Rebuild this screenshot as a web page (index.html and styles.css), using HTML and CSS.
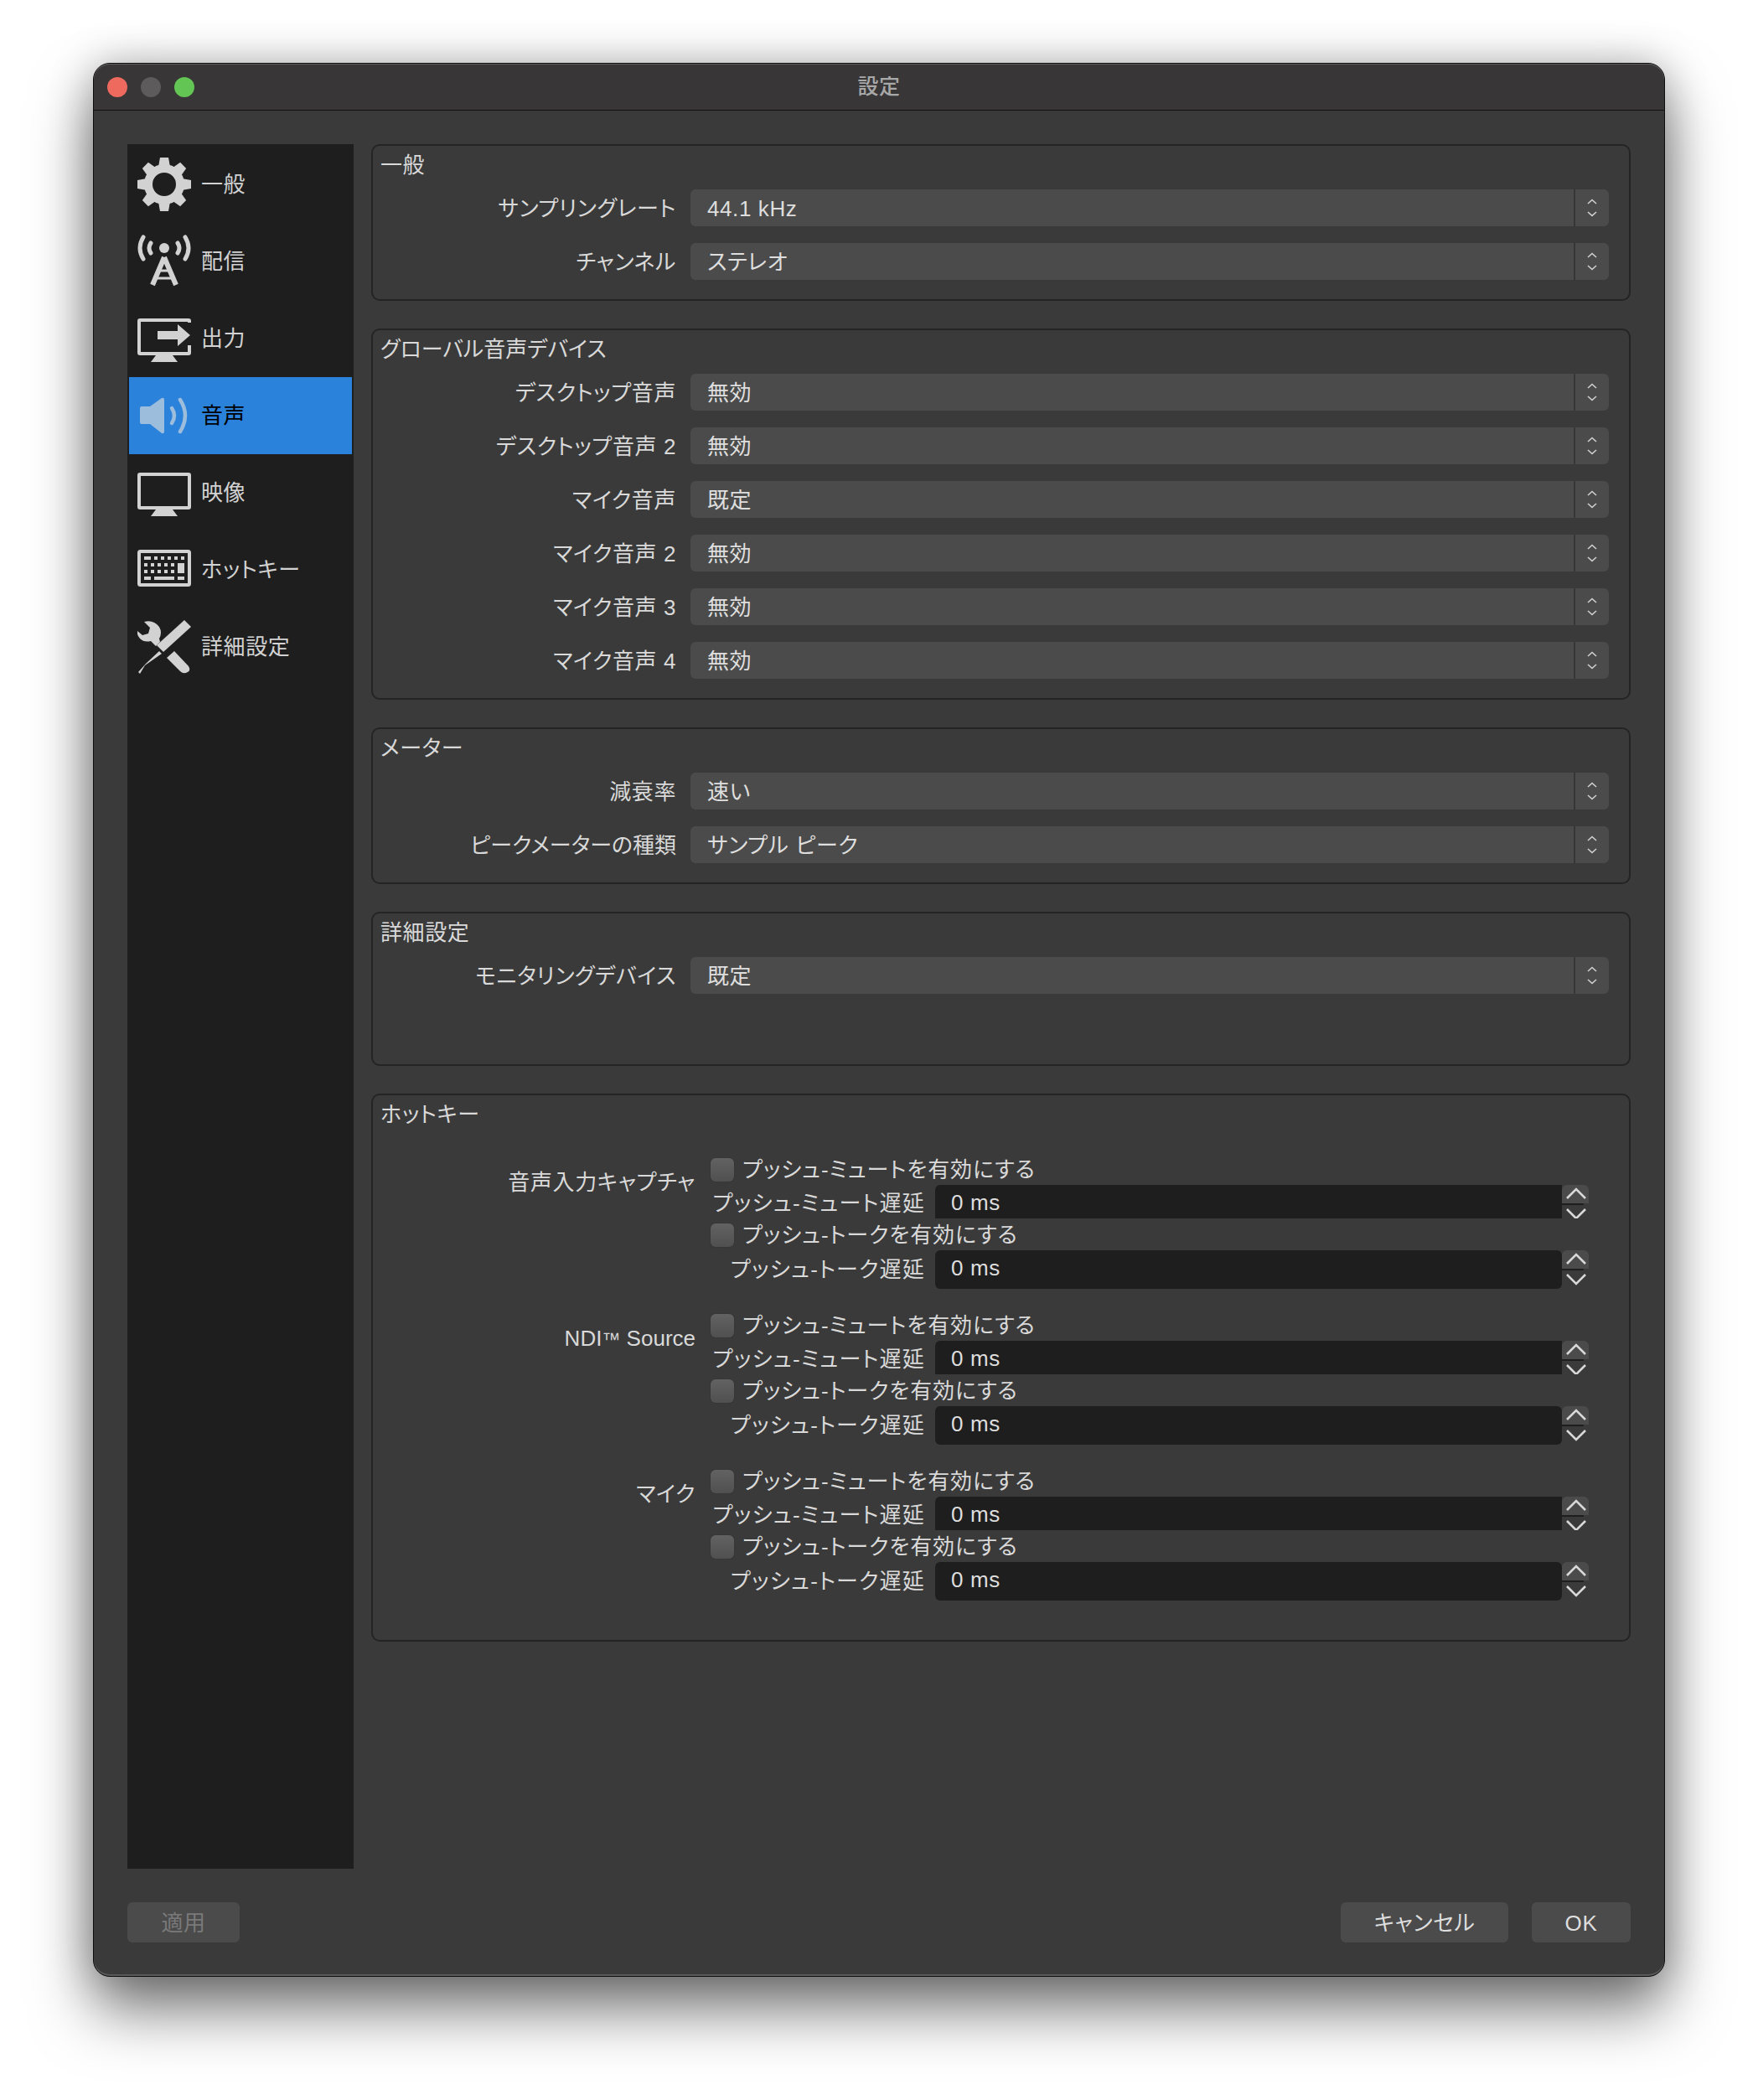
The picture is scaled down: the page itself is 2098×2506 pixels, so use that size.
FILE: index.html
```html
<!DOCTYPE html>
<html lang="ja">
<head>
    <meta charset="UTF-8">
    <title>設定</title>
    <link rel="stylesheet" href="styles.css">
</head>
<body>
    <!-- 共通アイコン -->
    <svg class="defs" width="0" height="0">
        <symbol id="chev-up" viewBox="0 0 24 14"><path d="M1 13 L12 2 L23 13" fill="none" stroke="currentColor" stroke-width="2.6"/></symbol>
        <symbol id="chev-down" viewBox="0 0 24 14"><path d="M1 1 L12 12 L23 1" fill="none" stroke="currentColor" stroke-width="2.6"/></symbol>
        <symbol id="caret" viewBox="0 0 12 22"><path d="M1 6 L6 1.5 L11 6 M1 16 L6 20.5 L11 16" fill="none" stroke="currentColor" stroke-width="1.6"/></symbol>
        <symbol id="screen" viewBox="0 0 64 64"><path d="M22 52 H42 L48 60 H16 Z" fill="currentColor"/><rect x="2" y="10" width="60" height="40" rx="1" fill="none" stroke="currentColor" stroke-width="4"/></symbol>
    </svg>

    <div class="window">
        <div class="titlebar">
            <span class="light red"></span>
            <span class="light grey"></span>
            <span class="light green"></span>
            <span class="title">設定</span>
        </div>

        <div class="content">
            <div class="sidebar">
                <div class="nav-item">
                    <svg class="nav-icon" viewBox="0 0 64 64" fill="currentColor">
                        <circle cx="32" cy="32" r="19" fill="none" stroke="currentColor" stroke-width="10"/>
                        <g id="tooth"><path d="M27 0 H37 L39 11 H25 Z"/></g>
                        <use href="#tooth" transform="rotate(45 32 32)"/>
                        <use href="#tooth" transform="rotate(90 32 32)"/>
                        <use href="#tooth" transform="rotate(135 32 32)"/>
                        <use href="#tooth" transform="rotate(180 32 32)"/>
                        <use href="#tooth" transform="rotate(225 32 32)"/>
                        <use href="#tooth" transform="rotate(270 32 32)"/>
                        <use href="#tooth" transform="rotate(315 32 32)"/>
                    </svg>
                    <span>一般</span>
                </div>
                <div class="nav-item">
                    <svg class="nav-icon" viewBox="0 0 64 64" fill="none" stroke="currentColor">
                        <circle cx="32" cy="16" r="6" fill="currentColor" stroke="none"/>
                        <path d="M16 10 Q12 16 16 22 M48 10 Q52 16 48 22" stroke-width="5" stroke-linecap="round"/>
                        <path d="M7 3 Q-1 16 7 29 M57 3 Q65 16 57 29" stroke-width="5" stroke-linecap="round"/>
                        <path d="M32 27 L18 60 M32 27 L46 60" stroke-width="6"/>
                        <path d="M25 43 H39" stroke-width="3"/>
                        <path d="M21 52 H43" stroke-width="3"/>
                    </svg>
                    <span>配信</span>
                </div>
                <div class="nav-item">
                    <svg class="nav-icon" viewBox="0 0 64 64" fill="currentColor">
                        <path d="M22 52 H42 L48 60 H16 Z"/>
                        <path d="M3 8 H61 Q64 8 64 11 V13 H60 V12 H4 V48 H60 V40 H64 V49 Q64 52 61 52 H3 Q0 52 0 49 V11 Q0 8 3 8 Z"/>
                        <path d="M24 23 H48 V15 L63 28 L48 41 V33 H24 Z"/>
                    </svg>
                    <span>出力</span>
                </div>
                <div class="nav-item active">
                    <svg class="nav-icon" viewBox="0 0 64 64" fill="currentColor">
                        <path d="M5 21 H15 L29 11 Q32 10 32 13 V51 Q32 54 29 53 L15 42 H5 Q3 42 3 40 V23 Q3 21 5 21 Z"/>
                        <path d="M41 23 Q47 32 41 41" fill="none" stroke="currentColor" stroke-width="4.5" stroke-linecap="round"/>
                        <path d="M51 13 Q63 32 51 51" fill="none" stroke="currentColor" stroke-width="4.5" stroke-linecap="round"/>
                    </svg>
                    <span>音声</span>
                </div>
                <div class="nav-item">
                    <svg class="nav-icon"><use href="#screen"/></svg>
                    <span>映像</span>
                </div>
                <div class="nav-item">
                    <svg class="nav-icon" viewBox="0 0 64 64" fill="currentColor">
                        <rect x="2" y="10" width="60" height="40" rx="1.5" fill="none" stroke="currentColor" stroke-width="4"/>
                        <path d="M8 16h8v4h-8z M20 16h4v4h-4z M28 16h4v4h-4z M36 16h4v4h-4z M44 16h4v4h-4z M52 16h4v4h-4z"/>
                        <path d="M8 24h4v4h-4z M16 24h4v4h-4z M24 24h4v4h-4z M32 24h4v4h-4z M40 24h4v4h-4z M48 24h8v12h-8z"/>
                        <path d="M8 32h4v4h-4z M16 32h4v4h-4z M24 32h4v4h-4z M32 32h4v4h-4z M40 32h4v4h-4z"/>
                        <path d="M8 40h8v4h-8z M20 40h24v4h-24z M48 40h8v4h-8z"/>
                    </svg>
                    <span>ホットキー</span>
                </div>
                <div class="nav-item">
                    <svg class="nav-icon" viewBox="0 0 64 64" fill="currentColor">
                        <path d="M56 0 L64 8 L31 38 L23 30 Z"/>
                        <path d="M26 37 L29 40 L9 54 L3 64 L1 62 L10 52 Z"/>
                        <path d="M35 45 L44 37 L61 55 Q64 60 60 62 Q55 65 51 61 Z"/>
                        <path d="M8 2 Q19 -1 26 8 Q30 15 26 22 L27 26 L22 31 L16 25 Q8 27 3 22 Q-1 18 0 13 L6 18 L13 16 L15 9 Z"/>
                    </svg>
                    <span>詳細設定</span>
                </div>
            </div>

            <div class="panels">
                <section class="group">
                    <div class="group-title">一般</div>
                    <div class="form-row"><label>サンプリングレート</label><div class="select"><span>44.1 kHz</span><i class="caret"><svg><use href="#caret"/></svg></i></div></div>
                    <div class="form-row"><label>チャンネル</label><div class="select"><span>ステレオ</span><i class="caret"><svg><use href="#caret"/></svg></i></div></div>
                </section>

                <section class="group">
                    <div class="group-title tight">グローバル音声デバイス</div>
                    <div class="form-row"><label>デスクトップ音声</label><div class="select"><span>無効</span><i class="caret"><svg><use href="#caret"/></svg></i></div></div>
                    <div class="form-row"><label>デスクトップ音声 2</label><div class="select"><span>無効</span><i class="caret"><svg><use href="#caret"/></svg></i></div></div>
                    <div class="form-row"><label>マイク音声</label><div class="select"><span>既定</span><i class="caret"><svg><use href="#caret"/></svg></i></div></div>
                    <div class="form-row"><label>マイク音声 2</label><div class="select"><span>無効</span><i class="caret"><svg><use href="#caret"/></svg></i></div></div>
                    <div class="form-row"><label>マイク音声 3</label><div class="select"><span>無効</span><i class="caret"><svg><use href="#caret"/></svg></i></div></div>
                    <div class="form-row"><label>マイク音声 4</label><div class="select"><span>無効</span><i class="caret"><svg><use href="#caret"/></svg></i></div></div>
                </section>

                <section class="group">
                    <div class="group-title">メーター</div>
                    <div class="form-row"><label>減衰率</label><div class="select"><span>速い</span><i class="caret"><svg><use href="#caret"/></svg></i></div></div>
                    <div class="form-row"><label class="tight">ピークメーターの種類</label><div class="select"><span>サンプル ピーク</span><i class="caret"><svg><use href="#caret"/></svg></i></div></div>
                </section>

                <section class="group group-monitor">
                    <div class="group-title">詳細設定</div>
                    <div class="form-row"><label>モニタリングデバイス</label><div class="select"><span>既定</span><i class="caret"><svg><use href="#caret"/></svg></i></div></div>
                </section>

                <section class="group group-hotkeys">
                    <div class="group-title">ホットキー</div>

                    <div class="hotkey-set">
                        <div class="hotkey-name">音声入力キャプチャ</div>
                        <div class="hotkey-fields">
                            <div class="check-row"><span class="checkbox"></span><span>プッシュ-ミュートを有効にする</span></div>
                            <div class="delay-row short"><label>プッシュ-ミュート遅延</label><div class="spin-input">0 ms</div><div class="spinner"><b class="up"><svg><use href="#chev-up"/></svg></b><b class="down"><svg><use href="#chev-down"/></svg></b></div></div>
                            <div class="check-row"><span class="checkbox"></span><span>プッシュ-トークを有効にする</span></div>
                            <div class="delay-row"><label>プッシュ-トーク遅延</label><div class="spin-input">0 ms</div><div class="spinner"><b class="up"><svg><use href="#chev-up"/></svg></b><b class="down"><svg><use href="#chev-down"/></svg></b></div></div>
                        </div>
                    </div>

                    <div class="hotkey-set">
                        <div class="hotkey-name latin">NDI<span class="tm">™</span> Source</div>
                        <div class="hotkey-fields">
                            <div class="check-row"><span class="checkbox"></span><span>プッシュ-ミュートを有効にする</span></div>
                            <div class="delay-row short"><label>プッシュ-ミュート遅延</label><div class="spin-input">0 ms</div><div class="spinner"><b class="up"><svg><use href="#chev-up"/></svg></b><b class="down"><svg><use href="#chev-down"/></svg></b></div></div>
                            <div class="check-row"><span class="checkbox"></span><span>プッシュ-トークを有効にする</span></div>
                            <div class="delay-row"><label>プッシュ-トーク遅延</label><div class="spin-input">0 ms</div><div class="spinner"><b class="up"><svg><use href="#chev-up"/></svg></b><b class="down"><svg><use href="#chev-down"/></svg></b></div></div>
                        </div>
                    </div>

                    <div class="hotkey-set">
                        <div class="hotkey-name">マイク</div>
                        <div class="hotkey-fields">
                            <div class="check-row"><span class="checkbox"></span><span>プッシュ-ミュートを有効にする</span></div>
                            <div class="delay-row short"><label>プッシュ-ミュート遅延</label><div class="spin-input">0 ms</div><div class="spinner"><b class="up"><svg><use href="#chev-up"/></svg></b><b class="down"><svg><use href="#chev-down"/></svg></b></div></div>
                            <div class="check-row"><span class="checkbox"></span><span>プッシュ-トークを有効にする</span></div>
                            <div class="delay-row"><label>プッシュ-トーク遅延</label><div class="spin-input">0 ms</div><div class="spinner"><b class="up"><svg><use href="#chev-up"/></svg></b><b class="down"><svg><use href="#chev-down"/></svg></b></div></div>
                        </div>
                    </div>
                </section>
            </div>
        </div>

        <div class="footer">
            <button class="btn btn-apply">適用</button>
            <div class="footer-right">
                <button class="btn btn-cancel">キャンセル</button>
                <button class="btn btn-ok">OK</button>
            </div>
        </div>
    </div>
</body>
</html>
```

FILE: styles.css
```css
html, body {
    margin: 0;
    padding: 0;
    height: 2506px;
    overflow: hidden;
    background: #fff;
}
body {
    padding: 75px 111px 0;
    box-sizing: border-box;
    font-family: "Liberation Sans", "Noto Sans CJK JP", sans-serif;
    font-size: 26px;
    line-height: 30px;
    font-feature-settings: "palt";
    letter-spacing: 0.6px;
    color: #d9d9d9;
}
.defs {
    position: absolute;
}

/* ウィンドウ */
.window {
    width: 1876px;
    height: 2284px;
    box-sizing: border-box;
    background: #3a3a3a;
    border: 1px solid #0c0c0c;
    border-radius: 20px;
    box-shadow: inset 0 1px 0 #666, inset 0 -2px 0 #5a5a5a, 0 40px 72px rgba(0, 0, 0, 0.52), 0 0 50px rgba(0, 0, 0, 0.25);
    display: flex;
    flex-direction: column;
}
.titlebar {
    height: 56px;
    box-sizing: border-box;
    background: #383637;
    border-bottom: 1px solid #111;
    border-radius: 19px 19px 0 0;
    box-shadow: inset 0 1px 0 #5f5f5f;
    padding-left: 16px;
    display: flex;
    align-items: center;
    gap: 16px;
    position: relative;
}
.light {
    width: 24px;
    height: 24px;
    border-radius: 50%;
}
.light.red { background: #ee6a5f; }
.light.grey { background: #5d5b5c; }
.light.green { background: #62c554; }
.title {
    position: absolute;
    left: 0;
    right: 0;
    top: 12px;
    text-align: center;
    font-size: 25px;
    font-weight: 500;
    color: #a8a8a8;
}

.content {
    flex: 1;
    display: flex;
    gap: 21px;
    padding: 40px 40px 0;
    min-height: 0;
}

/* サイドバー */
.sidebar {
    width: 270px;
    height: 2058px;
    box-sizing: border-box;
    padding: 2px;
    background: #1e1e1e;
    flex-shrink: 0;
}
.nav-item {
    height: 92px;
    display: flex;
    align-items: center;
    gap: 12px;
    padding-left: 10px;
    color: #d2d2d2;
}
.nav-item.active {
    background: #2a82da;
    color: #000;
}
.nav-item.active .nav-icon {
    color: #9dbddd;
}
.nav-icon {
    width: 64px;
    height: 64px;
    flex-shrink: 0;
}

/* グループ */
.panels {
    flex: 1;
    display: flex;
    flex-direction: column;
    gap: 33px;
}
.group {
    border: 2px solid #242424;
    border-radius: 10px;
    padding: 8px 24px 23px 9px;
    display: flex;
    flex-direction: column;
    gap: 20px;
}
.group-title {
    margin-bottom: -6px;
}
.tight {
    letter-spacing: 0;
}
.group-monitor {
    height: 184px;
    box-sizing: border-box;
}
.group-hotkeys {
    gap: 0;
    padding-bottom: 47px;
}
.form-row {
    display: flex;
    align-items: center;
    gap: 17px;
    height: 44px;
}
.form-row label {
    width: 353px;
    padding-top: 2px;
    text-align: right;
    flex-shrink: 0;
}
.select {
    flex: 1;
    height: 44px;
    background: #4b4b4b;
    border-radius: 6px;
    display: flex;
    align-items: center;
    justify-content: space-between;
    padding-left: 20px;
    color: #dedede;
}
.select span {
    padding-top: 2px;
}
.caret {
    width: 40px;
    height: 44px;
    border-left: 2px solid #363636;
    display: flex;
    align-items: center;
    justify-content: center;
    color: #d0d0d0;
}
.caret svg {
    width: 12px;
    height: 22px;
}

/* ホットキー */
.hotkey-set {
    display: flex;
    gap: 18px;
    height: 156px;
    margin-bottom: 30px;
}
.group-hotkeys .group-title {
    margin-bottom: 37px;
}
.hotkey-set:last-child {
    margin-bottom: 0;
}
.hotkey-name {
    width: 376px;
    text-align: right;
    padding-top: 14px;
    flex-shrink: 0;
}
.hotkey-name.latin {
    letter-spacing: 0;
}
.tm {
    font-size: 22px;
}
.hotkey-fields {
    width: 1048px;
}
.check-row {
    height: 28px;
    display: flex;
    align-items: center;
    gap: 10px;
    margin-bottom: 4px;
    letter-spacing: 0.9px;
}
.checkbox {
    width: 28px;
    height: 28px;
    box-sizing: border-box;
    border-radius: 6px;
    background: linear-gradient(#626262, #505050);
    box-shadow: 0 0 1px #222;
}
.delay-row {
    height: 46px;
    display: flex;
}
.delay-row.short {
    height: 40px;
    margin-bottom: 6px;
}
.delay-row label {
    width: 256px;
    text-align: right;
    line-height: 46px;
    margin-right: 12px;
    flex-shrink: 0;
    letter-spacing: 1.2px;
}
.delay-row.short label {
    line-height: 44px;
}
.spin-input {
    width: 748px;
    box-sizing: border-box;
    padding-left: 19px;
    background: #1e1e1e;
    border-radius: 6px;
    line-height: 42px;
    color: #dedede;
}
.short .spin-input {
    border-radius: 6px 0 0 0;
}
.spinner {
    width: 32px;
    overflow: hidden;
}
.spinner b {
    display: block;
    color: #d8d8d8;
}
.spinner svg {
    width: 24px;
    height: 14px;
    display: block;
    margin-left: 5px;
}
.spinner .up {
    height: 22px;
    padding-top: 0;
    background: #4b4b4b;
    border-radius: 6px 6px 0 0;
}
.spinner .up svg {
    padding-top: 3px;
}
.spinner .down {
    height: 22px;
    padding-top: 6px;
    background: linear-gradient(#1e1e1e, #1e1e1e) 0 0 / 26px 2px no-repeat;
}

/* 下部ボタン */
.footer {
    height: 48px;
    padding: 0 40px 40px;
    display: flex;
    justify-content: space-between;
}
.footer-right {
    display: flex;
    gap: 28px;
}
.btn {
    height: 48px;
    border: none;
    border-radius: 6px;
    background: #4b4b4b;
    color: #dedede;
    font: inherit;
    font-feature-settings: "palt";
    letter-spacing: 0.6px;
    padding: 2px 0 0;
}
.btn-apply {
    width: 134px;
    color: #7a7a7a;
}
.btn-cancel {
    width: 200px;
}
.btn-ok {
    width: 118px;
}
```
